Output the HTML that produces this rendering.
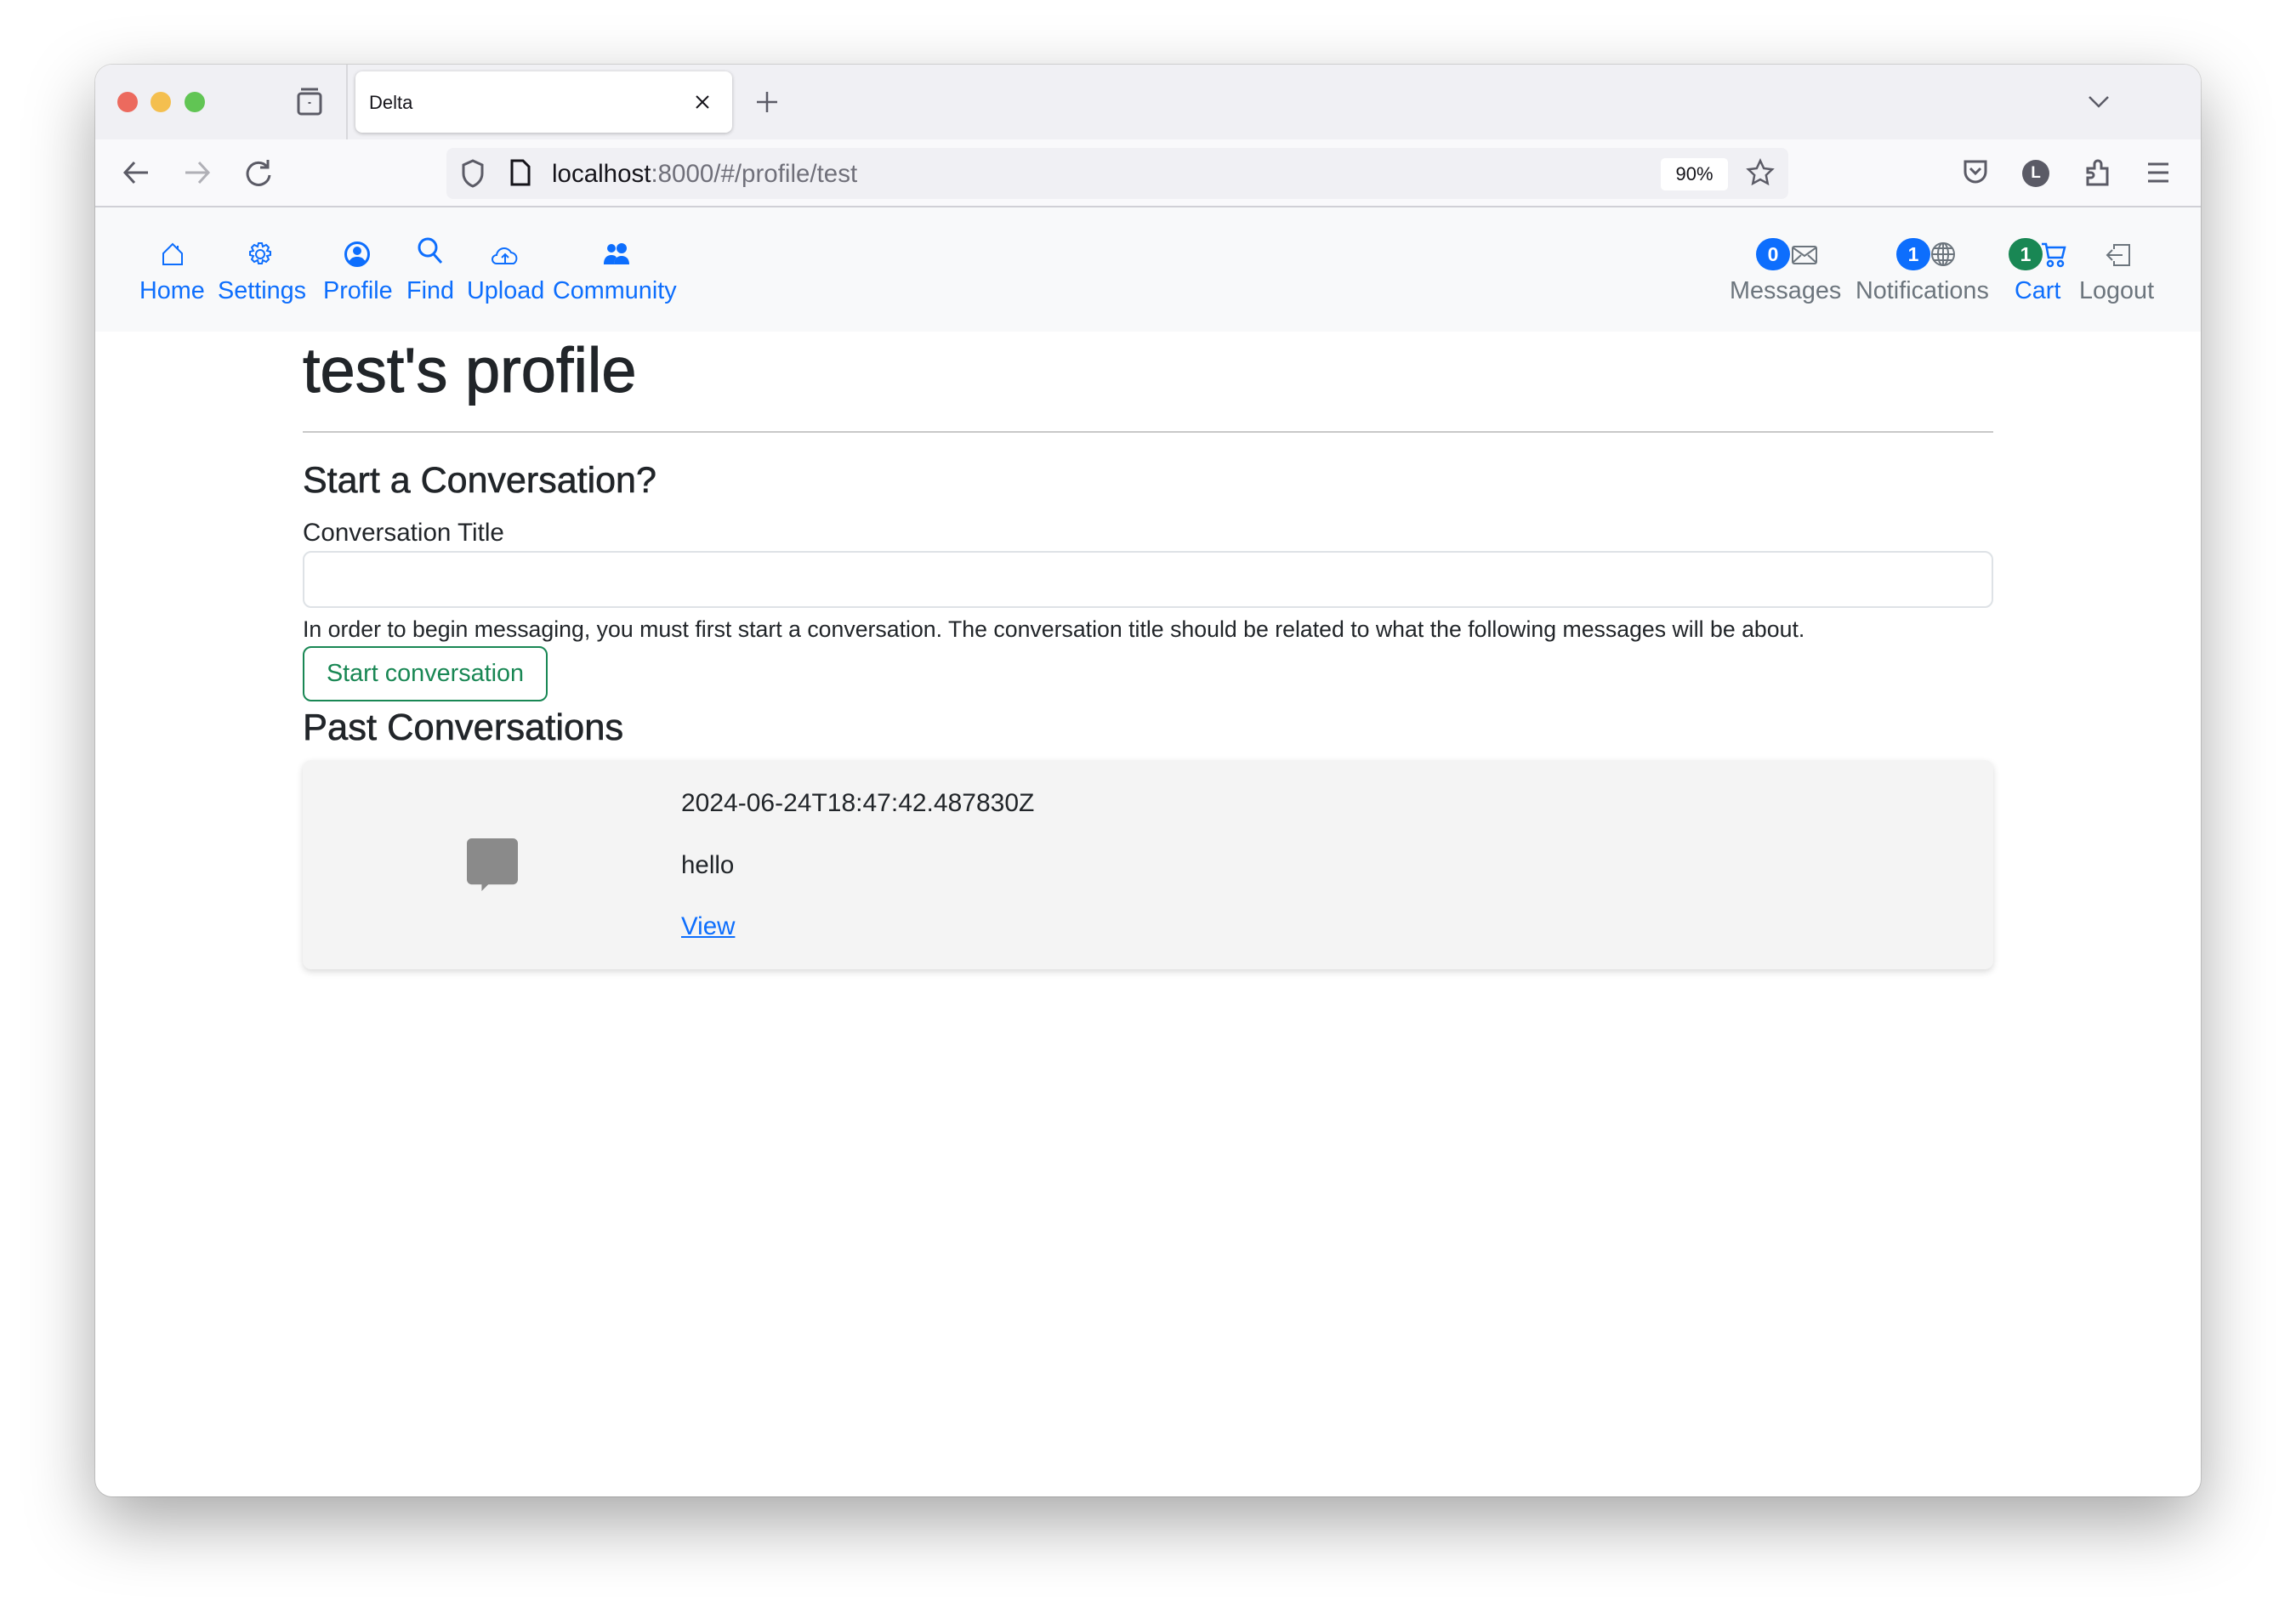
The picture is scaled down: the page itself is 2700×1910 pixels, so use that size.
<!DOCTYPE html>
<html><head><meta charset="utf-8"><style>
*{box-sizing:border-box;margin:0;padding:0}
body{width:2700px;height:1910px;background:#fff;font-family:"Liberation Sans",sans-serif;position:relative;overflow:hidden}
.win{position:absolute;left:112px;top:76px;width:2476px;height:1684px;border-radius:20px;background:#fff;box-shadow:0 30px 80px rgba(0,0,0,.35),0 0 0 1px rgba(0,0,0,.12);overflow:hidden}
.tabbar{position:absolute;left:0;top:0;width:100%;height:88px;background:#f0f0f4}
.toolbar{position:absolute;left:0;top:88px;width:100%;height:80px;background:#f9f9fb;border-bottom:2px solid #d0d0d6}
.navb{position:absolute;left:0;top:168px;width:100%;height:146px;background:#f8f9fa}
.abs{position:absolute}
.dot{position:absolute;top:32px;width:24px;height:24px;border-radius:50%}
.tab{position:absolute;left:306px;top:8px;width:443px;height:72px;background:#fff;border-radius:8px;box-shadow:0 1px 4px rgba(0,0,0,.25)}
.url{position:absolute;left:413px;top:10px;width:1578px;height:60px;background:#f0f0f4;border-radius:8px}
.nl{position:absolute;top:78px;font-size:28.8px;color:#0d6efd;text-align:center;line-height:40px}
.nl.g{color:#6c757d}
.ic{position:absolute;top:40px}
.badge{position:absolute;top:36px;width:40px;height:38px;border-radius:19px;color:#fff;font-weight:bold;font-size:23px;text-align:center;line-height:38px}
.content{position:absolute;left:244px;top:314px;width:1988px;color:#212529}
</style></head><body>
<div class="win">
 <div class="tabbar">
  <div class="dot" style="left:26px;background:#ec6a5e"></div>
  <div class="dot" style="left:65px;background:#f4bf4f"></div>
  <div class="dot" style="left:105px;background:#61c554"></div>
  <svg class="abs" style="left:236px;top:26px" width="32" height="36" viewBox="0 0 32 36" fill="none" stroke="#5b5b66" stroke-width="3"><rect x="3" y="8" width="26" height="24" rx="3"/><path d="M6 3h20"/><path d="M16 18v2"/></svg>
  <div class="abs" style="left:295px;top:0;width:2px;height:88px;background:#d8d8dc"></div>
  <div class="tab"><span class="abs" style="left:16px;top:24px;font-size:22px;color:#15141a">Delta</span>
   <svg class="abs" style="left:398px;top:26px" width="20" height="20" viewBox="0 0 20 20" stroke="#15141a" stroke-width="2"><path d="M3 3l14 14M17 3L3 17"/></svg></div>
  <svg class="abs" style="left:777px;top:31px" width="26" height="26" viewBox="0 0 26 26" stroke="#5b5b66" stroke-width="2.5"><path d="M13 1v24M1 13h24"/></svg>
  <svg class="abs" style="left:2343px;top:36px" width="26" height="16" viewBox="0 0 26 16" fill="none" stroke="#5b5b66" stroke-width="2.5"><path d="M2 2l11 11 11-11"/></svg>
 </div>
 <div class="toolbar">
  <svg class="abs" style="left:32px;top:24px" width="32" height="30" viewBox="0 0 32 30" fill="none" stroke="#5b5b66" stroke-width="3"><path d="M30 15H3M14 3L3 15l11 12"/></svg>
  <svg class="abs" style="left:104px;top:24px" width="32" height="30" viewBox="0 0 32 30" fill="none" stroke="#b0b0b6" stroke-width="3"><path d="M2 15h27M18 3l11 12-11 12"/></svg>
  <svg class="abs" style="left:176px;top:22px" width="32" height="34" viewBox="0 0 32 34" fill="none" stroke="#5b5b66" stroke-width="3"><path d="M26 10a13 13 0 1 0 3 10"/><path d="M27 2v9h-9"/></svg>
  <div class="url">
   <svg class="abs" style="left:17px;top:12px" width="28" height="36" viewBox="0 0 28 36" fill="none" stroke="#5b5b66" stroke-width="3"><path d="M14 3l11 5v10c0 8-6 13-11 15C9 31 3 26 3 18V8z"/></svg>
   <svg class="abs" style="left:74px;top:12px" width="26" height="34" viewBox="0 0 26 34" fill="none" stroke="#15141a" stroke-width="3"><path d="M3 3h13l7 7v21H3z"/></svg>
   <span class="abs" style="left:124px;top:14px;font-size:29.5px;color:#15141a">localhost<span style="color:#70707a">:8000/#/profile/test</span></span>
   <div class="abs" style="left:1428px;top:12px;width:79px;height:38px;background:#fff;border-radius:5px;font-size:22px;line-height:38px;text-align:center;color:#15141a">90%</div>
   <svg class="abs" style="left:1528px;top:12px" width="34" height="34" viewBox="0 0 34 34" fill="none" stroke="#5b5b66" stroke-width="2.5"><path d="M17 3l4.2 9 9.800 1.2-7.2 6.8 1.9 9.8L17 25l-8.7 4.8 1.9-9.8L3 13.2l9.8-1.2z"/></svg>
  </div>
  <svg class="abs" style="left:2196px;top:22px" width="30" height="32" viewBox="0 0 30 32" fill="none" stroke="#5b5b66" stroke-width="3"><path d="M3 4h24v12a12 12 0 0 1-24 0z"/><path d="M9 12l6 6 6-6"/></svg>
  <div class="abs" style="left:2266px;top:24px;width:32px;height:32px;border-radius:50%;background:#5b5b66;color:#fff;font-weight:bold;font-size:19px;text-align:center;line-height:32px">L</div>
  <svg class="abs" style="left:2340px;top:20px" width="30" height="36" viewBox="0 0 30 36" fill="none" stroke="#5b5b66" stroke-width="3"><path d="M3 14h8V9a4 4 0 0 1 8 0v5h7v19H3v-8h4a3 3 0 0 0 0-6H3z"/></svg>
  <svg class="abs" style="left:2412px;top:26px" width="28" height="26" viewBox="0 0 28 26" stroke="#5b5b66" stroke-width="3"><path d="M2 3h24M2 13h24M2 23h24"/></svg>
 </div>
 <div class="navb">
  <svg class="ic" style="left:77px" width="28" height="30" viewBox="0 0 28 30" fill="none" stroke="#0d6efd" stroke-width="2"><path d="M3 14L14 3l11 11v13H3z"/><path d="M20 5v4"/></svg>
  <svg class="ic" style="left:179px" width="30" height="30" viewBox="0 0 30 30" fill="none" stroke="#0d6efd" stroke-width="2"><circle cx="15" cy="15" r="5"/><path d="M13 2h4l1 4 4-2 3 3-2 4 4 1v4l-4 1 2 4-3 3-4-2-1 4h-4l-1-4-4 2-3-3 2-4-4-1v-4l4-1-2-4 3-3 4 2z"/></svg>
  <svg class="ic" style="left:292px;top:39px" width="32" height="32" viewBox="0 0 32 32"><circle cx="16" cy="16" r="13.5" fill="none" stroke="#0d6efd" stroke-width="3"/><circle cx="16" cy="12" r="5" fill="#0d6efd"/><path d="M6 25c3-5 6-6 10-6s7 1 10 6c-3 3-6 4-10 4s-7-1-10-4z" fill="#0d6efd"/></svg>
  <svg class="ic" style="left:378px;top:34px" width="32" height="34" viewBox="0 0 32 34" fill="none" stroke="#0d6efd" stroke-width="3"><circle cx="13" cy="13" r="10"/><path d="M20 21l9 10"/></svg>
  <svg class="ic" style="left:466px;top:44px" width="32" height="26" viewBox="0 0 32 26" fill="none" stroke="#0d6efd" stroke-width="2"><path d="M8 22H6a5 5 0 0 1 0-10 9 9 0 0 1 17-3 7 7 0 0 1 3 13z"/><path d="M16 21v-10M12 15l4-4 4 4"/></svg>
  <svg class="ic" style="left:597px;top:41px" width="32" height="28" viewBox="0 0 32 28" fill="#0d6efd"><circle cx="10" cy="7" r="5"/><circle cx="22" cy="7" r="6"/><path d="M1 26c0-8 4-11 9-11 3 0 5 1 6 3-2 2-3 5-3 8z"/><path d="M13 26c0-7 4-10 9-10s9 3 9 10z"/></svg>
  <div class="nl" style="left:52px">Home</div>
  <div class="nl" style="left:144px">Settings</div>
  <div class="nl" style="left:268px">Profile</div>
  <div class="nl" style="left:366px">Find</div>
  <div class="nl" style="left:437px">Upload</div>
  <div class="nl" style="left:538px">Community</div>

  <div class="badge" style="left:1953px;background:#0d6efd">0</div>
  <svg class="ic" style="left:1995px;top:45px" width="30" height="22" viewBox="0 0 30 22" fill="none" stroke="#6c757d" stroke-width="2"><rect x="1" y="1" width="28" height="20" rx="2"/><path d="M1 2l14 10 14-10M1 20l10-9M29 20l-10-9"/></svg>
  <div class="badge" style="left:2118px;background:#0d6efd">1</div>
  <svg class="ic" style="left:2158px" width="30" height="30" viewBox="0 0 30 30" fill="none" stroke="#6c757d" stroke-width="2"><circle cx="15" cy="15" r="13"/><ellipse cx="15" cy="15" rx="6" ry="13"/><path d="M2 15h26M15 2v26M4 8h22M4 22h22"/></svg>
  <div class="badge" style="left:2250px;background:#198754">1</div>
  <svg class="ic" style="left:2288px" width="30" height="32" viewBox="0 0 30 32" fill="none" stroke="#0d6efd" stroke-width="2.5"><path d="M1 3h5l3 16h16l3-12H7"/><circle cx="11" cy="26" r="3"/><circle cx="23" cy="26" r="3"/></svg>
  <svg class="ic" style="left:2364px;top:43px" width="30" height="26" viewBox="0 0 30 26" fill="none" stroke="#6c757d" stroke-width="2"><path d="M10 6V1h18v24H10v-5"/><path d="M20 13H2M8 7l-6 6 6 6"/></svg>
  <div class="nl g" style="left:1922px">Messages</div>
  <div class="nl g" style="left:2070px">Notifications</div>
  <div class="nl" style="left:2257px">Cart</div>
  <div class="nl g" style="left:2333px">Logout</div>
 </div>
 <div class="content">
  <div class="abs" style="left:0;top:6px;font-size:74px;line-height:80px;-webkit-text-stroke:1px #212529">test's profile</div>
  <div class="abs" style="left:0;top:117px;width:1988px;height:2px;background:#c8c8c8"></div>
  <div class="abs" style="left:0;top:146px;font-size:43px;line-height:58px;-webkit-text-stroke:0.6px #212529">Start a Conversation?</div>
  <div class="abs" style="left:0;top:217px;font-size:29.6px;line-height:40px">Conversation Title</div>
  <div class="abs" style="left:0;top:258px;width:1988px;height:67px;border:2px solid #dee2e6;border-radius:10px;background:#fff"></div>
  <div class="abs" style="left:0;top:332px;font-size:26.7px;line-height:36px;white-space:nowrap">In order to begin messaging, you must first start a conversation. The conversation title should be related to what the following messages will be about.</div>
  <div class="abs" style="left:0;top:370px;width:288px;height:65px;border:2px solid #198754;border-radius:10px;color:#198754;font-size:28.8px;line-height:61px;text-align:center">Start conversation</div>
  <div class="abs" style="left:0;top:437px;font-size:43.5px;line-height:58px;-webkit-text-stroke:0.6px #212529">Past Conversations</div>
  <div class="abs" style="left:0;top:504px;width:1988px;height:246px;background:#f4f4f4;border-radius:10px;box-shadow:0 3px 8px rgba(0,0,0,.15)">
   <svg class="abs" style="left:193px;top:92px" width="60" height="62" viewBox="0 0 62 64"><path d="M6 0h50a6 6 0 0 1 6 6v44a6 6 0 0 1-6 6H26L18 64V56H6a6 6 0 0 1-6-6V6a6 6 0 0 1 6-6z" fill="#8a8a8a"/></svg>
   <div class="abs" style="left:445px;top:31px;font-size:30px;line-height:40px">2024-06-24T18:47:42.487830Z</div>
   <div class="abs" style="left:445px;top:104px;font-size:29.5px;line-height:40px">hello</div>
   <div class="abs" style="left:445px;top:176px;font-size:29.5px;line-height:40px;color:#0d6efd;text-decoration:underline">View</div>
  </div>
 </div>
</div>
</body></html>
